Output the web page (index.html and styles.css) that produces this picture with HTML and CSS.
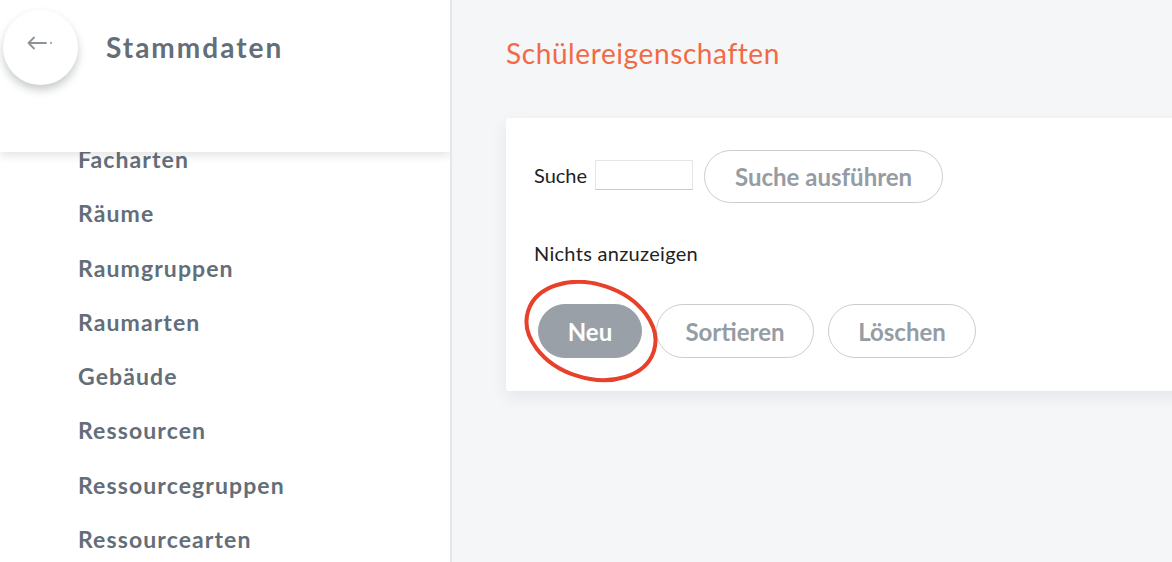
FILE: index.html
```html
<!DOCTYPE html>
<html lang="de">
<head>
<meta charset="utf-8">
<title>Stammdaten</title>
<link rel="stylesheet" href="styles.css">
</head>
<body>
<div class="app">
  <aside class="sidebar">
    <div class="side-head">
      <button class="back-btn" aria-label="Zurück">
        <svg width="30" height="14" viewBox="0 0 30 14">
          <path d="M8 1.5 L2.5 7 L8 12.5 M2.5 7 H20" fill="none" stroke="#8b939b" stroke-width="1.8" stroke-linecap="round" stroke-linejoin="round"/>
          <circle cx="25" cy="7" r="1" fill="#8b939b"/>
        </svg>
      </button>
      <h1 class="side-title">Stammdaten</h1>
    </div>
    <ul class="side-list">
      <li>Facharten</li>
      <li>Räume</li>
      <li>Raumgruppen</li>
      <li>Raumarten</li>
      <li>Gebäude</li>
      <li>Ressourcen</li>
      <li>Ressourcegruppen</li>
      <li>Ressourcearten</li>
    </ul>
  </aside>
  <main class="main">
    <h2 class="page-title">Schülereigenschaften</h2>
    <section class="card">
      <div class="search-row">
        <label class="lbl">Suche</label>
        <input class="search-input" type="text">
        <button class="pill">Suche ausführen</button>
      </div>
      <p class="empty">Nichts anzuzeigen</p>
      <div class="btn-row">
        <div class="neu-wrap">
          <button class="pill pill-filled">Neu</button>
          <svg class="mark" width="150" height="110" viewBox="0 0 150 110">
            <ellipse cx="74" cy="51" rx="66" ry="47" transform="rotate(18 74 51)" fill="none" stroke="#e8412b" stroke-width="4"/>
          </svg>
        </div>
        <button class="pill">Sortieren</button>
        <button class="pill">Löschen</button>
      </div>
    </section>
  </main>
</div>
</body>
</html>
```

FILE: styles.css
```css
* { box-sizing: border-box; }
html, body { margin: 0; padding: 0; height: 100%; }
body {
  font-family: Lato, "Open Sans", sans-serif;
  background: #f5f6f8;
  overflow: hidden;
}
.app {
  display: flex;
  height: 562px;
}
.sidebar {
  width: 452px;
  flex: 0 0 452px;
  background: #fff;
  border-right: 2px solid #e4e6e9;
  overflow: hidden;
  display: flex;
  flex-direction: column;
}
.side-head {
  position: relative;
  z-index: 2;
  flex: 0 0 152px;
  height: 152px;
  background: #fff;
  box-shadow: 0 4px 8px rgba(40, 50, 60, 0.12);
  display: flex;
  align-items: flex-start;
  padding: 10px 0 0 3px;
}
.back-btn {
  width: 75px;
  height: 75px;
  border-radius: 50%;
  border: none;
  background: #fff;
  box-shadow: 0 5px 9px rgba(60, 70, 80, 0.28);
  display: flex;
  align-items: center;
  justify-content: center;
  padding: 0 0 10px 0;
  cursor: pointer;
}
.side-title {
  margin: 18px 0 0 28px;
  font-size: 28px;
  font-weight: 700;
  color: #636e79;
  letter-spacing: 2px;
  line-height: 38px;
}
.side-list {
  list-style: none;
  margin: -20px 0 0 0;
  padding: 0 0 0 78px;
}
.side-list li {
  height: 54.3px;
  line-height: 54.3px;
  font-size: 23px;
  font-weight: 700;
  color: #636e79;
  letter-spacing: 1.1px;
}
.main {
  flex: 1;
  padding: 0 0 0 54px;
  min-width: 0;
}
.page-title {
  margin: 34px 0 0 0;
  font-size: 28px;
  font-weight: 400;
  color: #f26a45;
  line-height: 38px;
  letter-spacing: 0.6px;
}
.card {
  margin-top: 46px;
  width: 720px;
  background: #fff;
  border-radius: 3px;
  box-shadow: 0 6px 16px rgba(40, 50, 60, 0.08);
  padding: 32px 0 33px 28px;
}
.search-row {
  display: flex;
  align-items: center;
}
.lbl {
  font-size: 20px;
  color: #222;
  margin: -4px 8px 0 0;
}
.search-input {
  width: 98px;
  height: 30px;
  border: 1px solid #e3e5e8;
  border-bottom: 1.5px solid #c9cdd1;
  background: #fff;
  margin: -4px 11px 0 0;
  padding: 0;
}
.pill {
  height: 53px;
  border-radius: 27px;
  border: 1.5px solid #c9cdd2;
  background: #fff;
  color: #959ca4;
  font-family: Lato, "Open Sans", sans-serif;
  font-size: 24px;
  font-weight: 700;
  padding: 0;
  cursor: pointer;
}
.search-row .pill { width: 239px; }
.empty {
  margin: 39px 0 0 0;
  font-size: 20px;
  color: #222;
  line-height: 22px;
  letter-spacing: 0.3px;
}
.btn-row {
  display: flex;
  align-items: center;
  gap: 14px;
  margin-top: 40px;
  padding-left: 4px;
}
.btn-row .pill { height: 54px; }
.neu-wrap { position: relative; }
.pill-filled {
  width: 104px;
  background: #9aa0a7;
  border-color: #9aa0a7;
  color: #fff;
}
.btn-row > .pill:nth-child(2) { width: 158px; }
.btn-row > .pill:nth-child(3) { width: 148px; }
.mark {
  position: absolute;
  left: -21px;
  top: -24px;
  pointer-events: none;
}
```
